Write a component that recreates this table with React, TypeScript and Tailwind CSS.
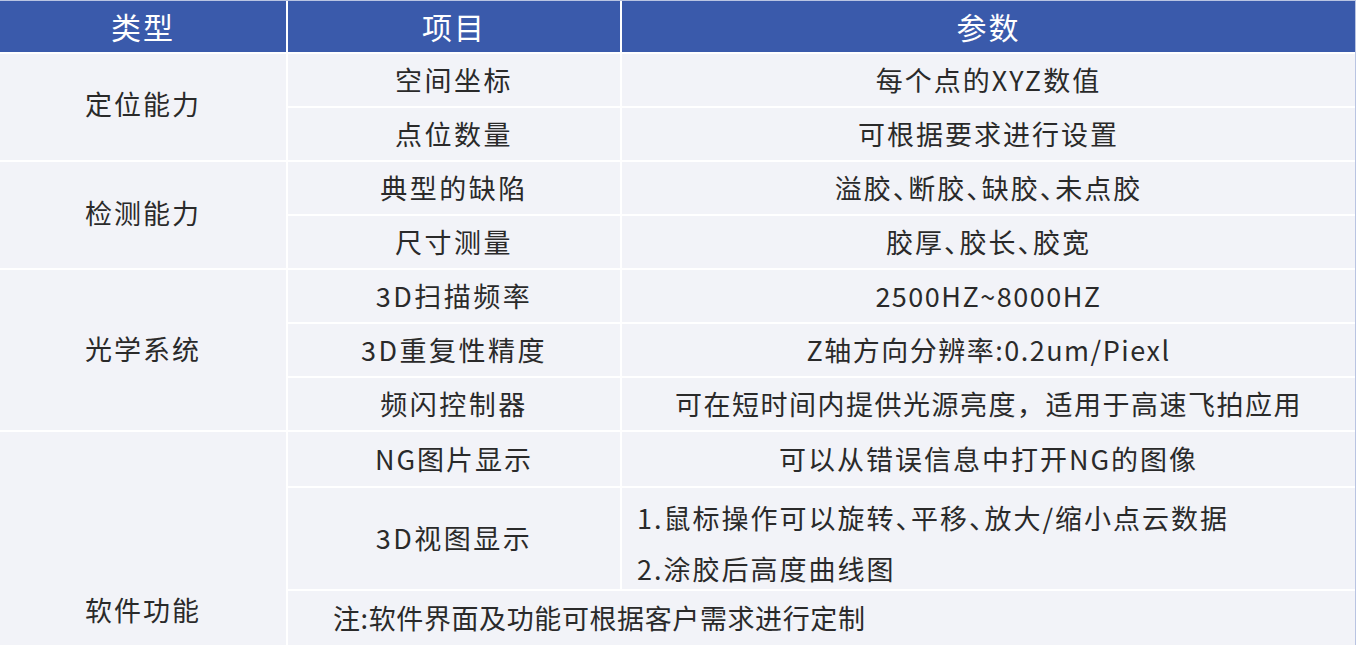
const font = { fontFamily: '"Noto Sans CJK SC", "Noto Sans", sans-serif' }

const cell = "bg-[#f2f3f8] flex items-center justify-center"
const cat = "bg-[#f2f3f8] flex items-center justify-center tracking-[2px]"
const item = "bg-[#f2f3f8] flex items-center justify-center tracking-[2.5px]"
const head = "bg-[#3a5aab] flex items-center justify-center text-white text-[30px] tracking-[2px]"
const halt = "[font-feature-settings:'halt']"

export default function App() {
  return (
    <div className="w-[1356px] h-[645px] bg-white" style={font}>
      <div className="w-[1356px] border-t border-r border-[#b9c4e2]">
        <div className="grid grid-cols-[286px_332px_733px] grid-rows-[51px_repeat(7,52px)_54px_101px_54px] gap-[2px] bg-white text-[27px] tracking-[2px] text-[#2a2a2a]">
          {/* 表头 */}
          <div className={head}>类型</div>
          <div className={head}>项目</div>
          <div className={head}>参数</div>

          {/* 定位能力 */}
          <div className={`${cat} row-span-2 pb-[6px]`}>定位能力</div>
          <div className={item}>空间坐标</div>
          <div className={cell}>每个点的XYZ数值</div>
          <div className={item}>点位数量</div>
          <div className={cell}>可根据要求进行设置</div>

          {/* 检测能力 */}
          <div className={`${cat} row-span-2 pb-[4px]`}>检测能力</div>
          <div className={item}>典型的缺陷</div>
          <div className={`${cell} ${halt}`}>溢胶、断胶、缺胶、未点胶</div>
          <div className={item}>尺寸测量</div>
          <div className={`${cell} ${halt}`}>胶厚、胶长、胶宽</div>

          {/* 光学系统 */}
          <div className={`${cat} row-span-3 pb-[2px]`}>光学系统</div>
          <div className={item}>3D扫描频率</div>
          <div className={`${cell} tracking-[1.5px]`}>2500HZ~8000HZ</div>
          <div className={item}>3D重复性精度</div>
          <div className={`${cell} tracking-[1.5px]`}>Z轴方向分辨率:0.2um/Piexl</div>
          <div className={item}>频闪控制器</div>
          <div className={`${cell} tracking-[1.5px]`}>可在短时间内提供光源亮度，适用于高速飞拍应用</div>

          {/* 软件功能 */}
          <div className="bg-[#f2f3f8] row-span-3 flex items-end justify-center pb-[15px] tracking-[2px]">软件功能</div>
          <div className={`${item} tracking-[2px]`}>NG图片显示</div>
          <div className={cell}>可以从错误信息中打开NG的图像</div>
          <div className={item}>3D视图显示</div>
          <div className={`bg-[#f2f3f8] flex flex-col justify-center pl-[15px] pt-[8px] leading-[51px] ${halt}`}>
            <div>1.鼠标操作可以旋转、平移、放大/缩小点云数据</div>
            <div>2.涂胶后高度曲线图</div>
          </div>
          <div className="bg-[#f2f3f8] col-span-2 flex items-center pl-[45px] tracking-[0.6px]">
            注:软件界面及功能可根据客户需求进行定制
          </div>
        </div>
      </div>
    </div>
  )
}
